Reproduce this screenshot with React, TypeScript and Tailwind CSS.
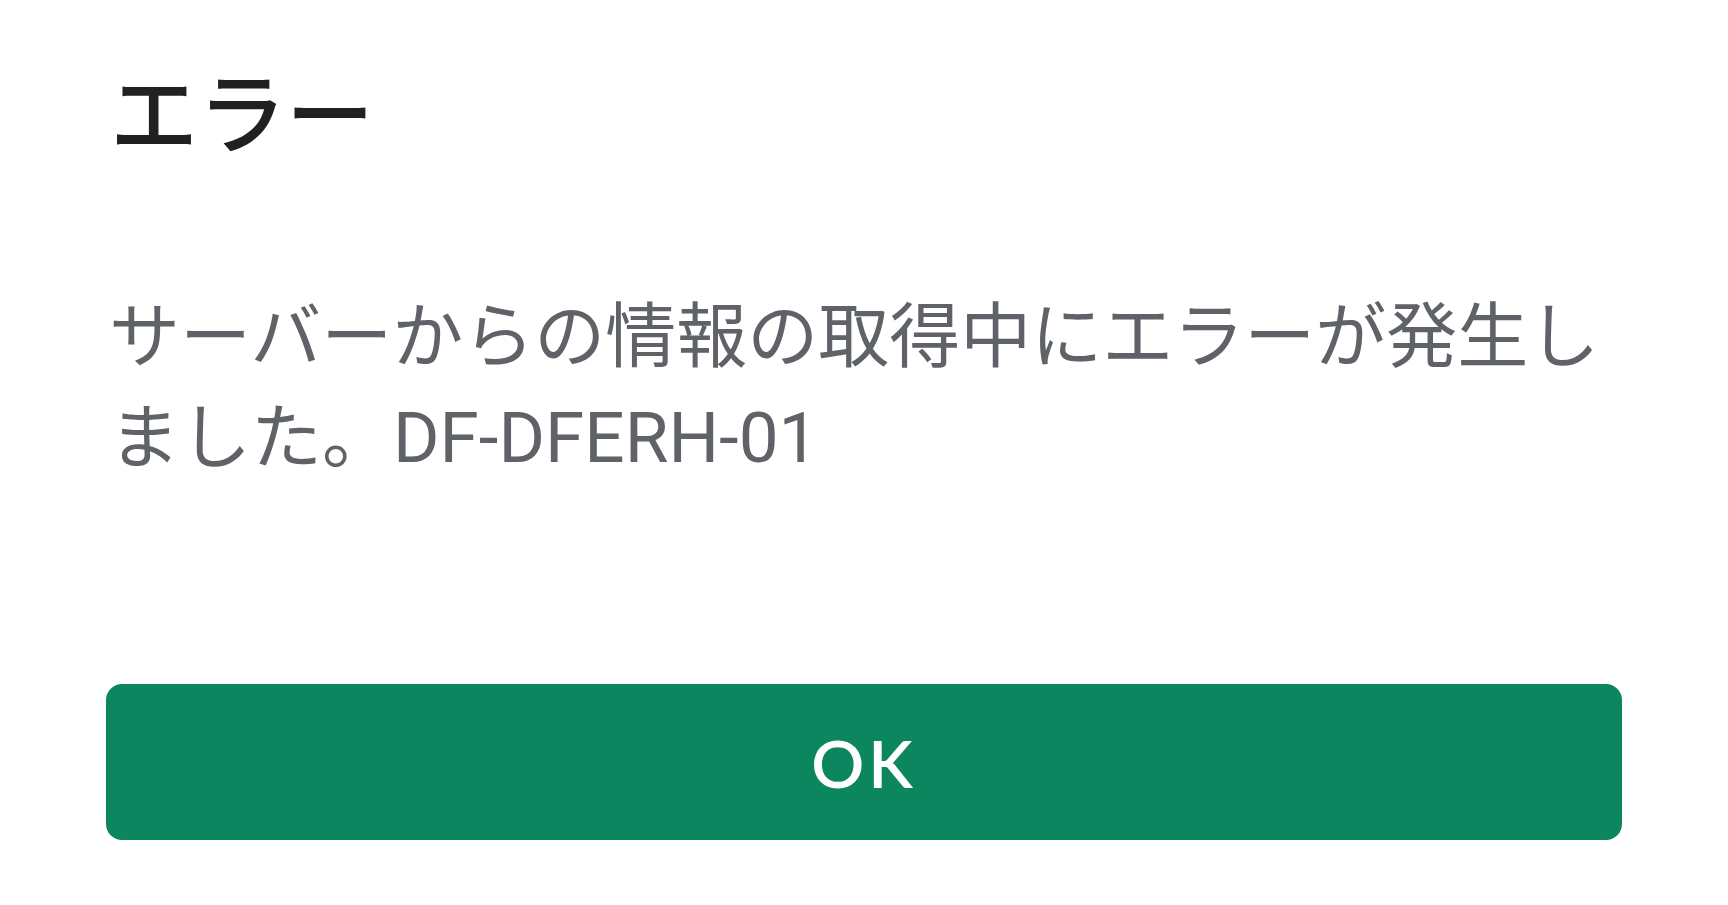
export default function App() {
  return (
    <div className="min-h-screen w-full bg-white">
      <div className="flex flex-col px-[106px] pt-[55px]">
        <h1 className="ml-[4px] text-[88px] font-medium leading-[106px] text-[#212121] [font-family:'Noto_Sans_CJK_JP','Noto_Sans_CJK_SC',sans-serif]">
          エラー
        </h1>
        <p className="ml-[3px] mt-[125px] text-[71px] font-normal leading-[101px] text-[#5f6368] [font-family:Roboto,'Noto_Sans_CJK_JP','Noto_Sans_CJK_SC',sans-serif]">
          サーバーからの情報の取得中にエラーが発生し
          <br />
          ました。DF-DFERH-01
        </p>
        <button className="mt-[196px] h-[156px] w-full rounded-[16px] bg-[#0c865e] text-[66px] font-semibold tracking-[0.06em] text-white [font-family:Lato,Roboto,sans-serif]">
          OK
        </button>
      </div>
    </div>
  );
}
